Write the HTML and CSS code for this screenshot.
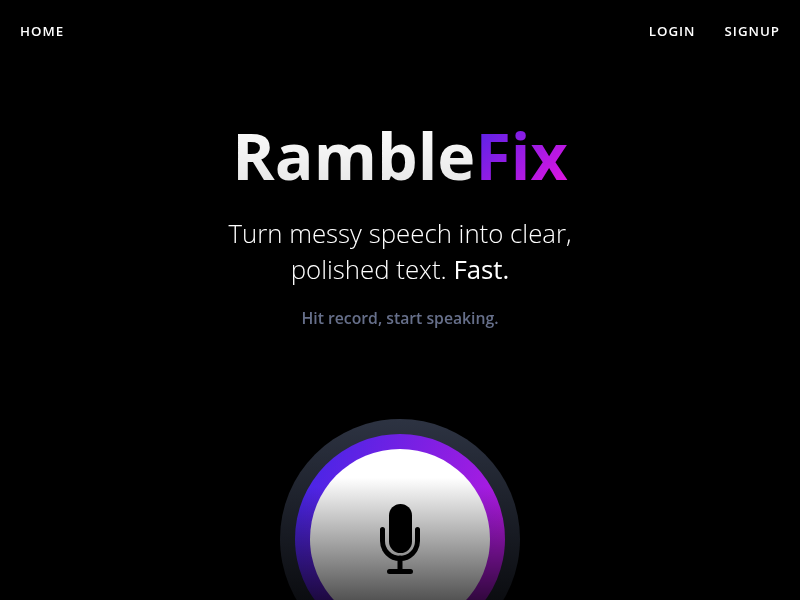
FILE: index.html
```html
<!DOCTYPE html>
<html lang="en">
<head>
    <meta charset="UTF-8">
    <meta name="viewport" content="width=device-width,initial-scale=1.0">
    <title>RambleFix</title>
    <link rel="stylesheet" href="styles.css">
</head>
<body>
    <nav class="topnav">
        <a href="#">Home</a>
        <div class="topnav-right">
            <a href="#">Login</a>
            <a href="#">Signup</a>
        </div>
    </nav>

    <main class="hero">
        <h1 class="logo"><span class="logo-ramble">Ramble</span><span class="logo-fix">Fix</span></h1>
        <p class="tagline">Turn messy speech into clear,<br>polished text. <span class="tagline-strong">Fast.</span></p>
        <p class="hint">Hit record, start speaking.</p>

        <div class="record-outer">
            <div class="record-ring">
                <button class="record-btn" aria-label="Record">
                    <svg class="mic" width="40" height="70" viewBox="0 0 40 70">
                        <rect x="9" y="0" width="23" height="49" rx="11.5" fill="#000"/>
                        <path d="M2.5 25.5V37a17.5 17.5 0 0 0 35 0V25.5" fill="none" stroke="#000" stroke-width="5" stroke-linecap="round"/>
                        <path d="M20 54V67M9.5 67.5H30.5" fill="none" stroke="#000" stroke-width="5" stroke-linecap="round"/>
                    </svg>
                </button>
            </div>
        </div>
    </main>
</body>
</html>
```

FILE: styles.css
```css
html, body {
    height: 100%;
    overflow: hidden;
}
body {
    margin: 0;
    background-color: #000;
    color: #fff;
    font-family: 'Open Sans', sans-serif;
}
.topnav {
    display: flex;
    justify-content: space-between;
    padding: 21px 20px 0;
    line-height: 20px;
    will-change: opacity;
}
.topnav a {
    color: #fff;
    text-decoration: none;
    text-transform: uppercase;
    font-size: 13.3px;
    font-weight: 600;
    letter-spacing: 1px;
}
.topnav-right {
    display: flex;
    gap: 29px;
}
.hero {
    display: flex;
    flex-direction: column;
    align-items: center;
    text-align: center;
    will-change: opacity;
}
.logo {
    margin: 69px 0 0;
    font-size: 64.4px;
    font-weight: 700;
    line-height: 90px;
}
.logo-ramble {
    background: linear-gradient(180deg, #fff, #e4e4e4);
    -webkit-background-clip: text;
    background-clip: text;
    color: transparent;
}
.logo-fix {
    background: linear-gradient(135deg, #4525e8, #f012e0);
    -webkit-background-clip: text;
    background-clip: text;
    color: transparent;
}
.tagline {
    margin: 15px 0 0;
    font-size: 25.8px;
    font-weight: 300;
    line-height: 36px;
}
.tagline-strong {
    font-weight: 400;
}
.hint {
    margin: 20px 0 0;
    font-size: 15.76px;
    font-weight: 600;
    line-height: 22px;
    color: #666f8a;
}
.record-outer {
    margin-top: 90px;
    flex-shrink: 0;
    width: 240px;
    height: 240px;
    padding: 15px;
    box-sizing: border-box;
    border-radius: 50%;
    background: linear-gradient(180deg, #2d3342, #000);
}
.record-ring {
    width: 210px;
    height: 210px;
    padding: 15px;
    box-sizing: border-box;
    border-radius: 50%;
    background: linear-gradient(180deg, transparent 25%, #000 100%), linear-gradient(110deg, #4a25e6 10%, #b41ae0 85%);
}
.record-btn {
    display: flex;
    align-items: center;
    justify-content: center;
    width: 180px;
    height: 180px;
    padding: 0;
    border: none;
    border-radius: 50%;
    background: linear-gradient(180deg, #fff 16%, #2a2a2a 100%);
}
```
